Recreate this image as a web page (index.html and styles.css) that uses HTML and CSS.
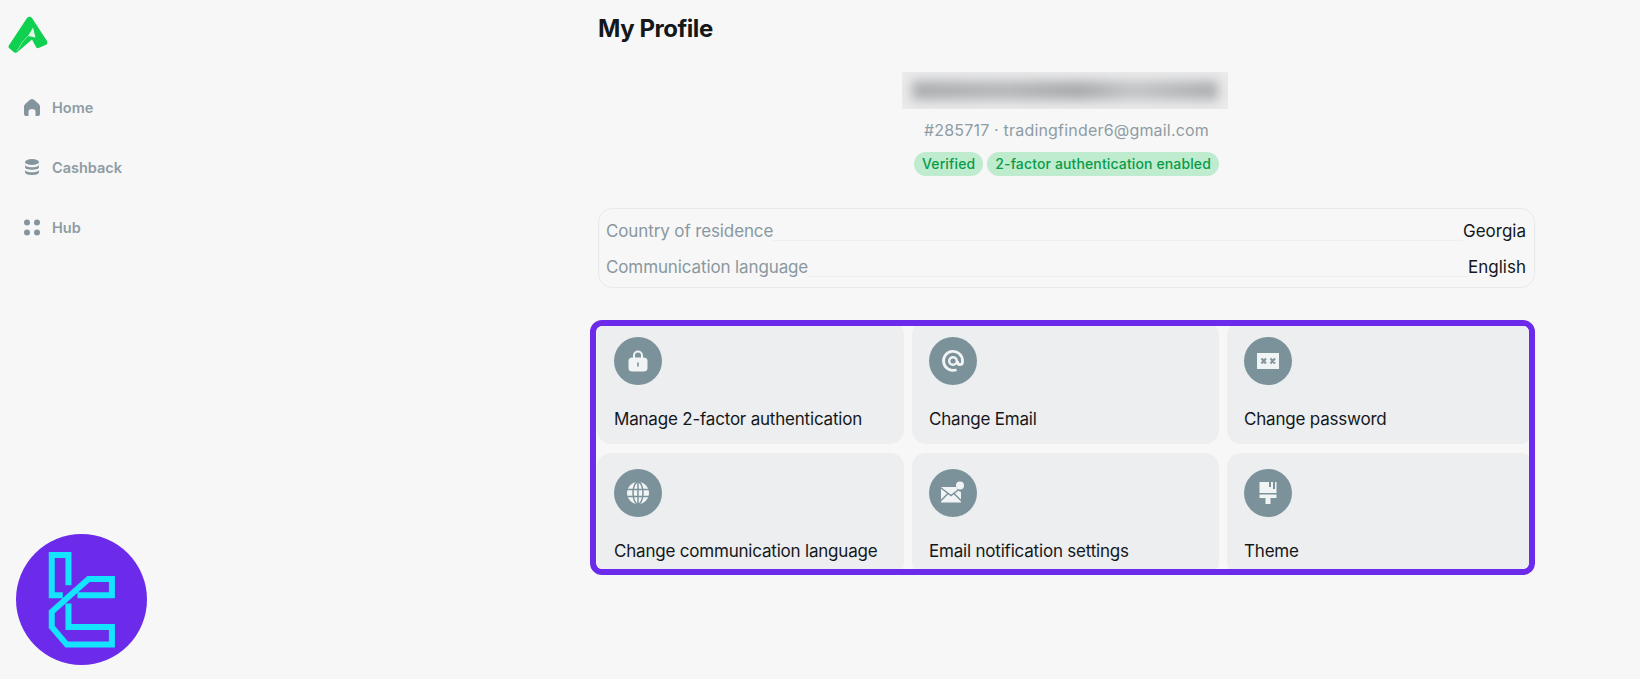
FILE: index.html
```html
<!DOCTYPE html>
<html lang="en">
<head>
<meta charset="utf-8">
<title>My Profile</title>
<link rel="stylesheet" href="styles.css">
</head>
<body>
<div class="page">
  <aside class="sidebar">
    <svg class="logo" viewBox="0 0 48 56" width="48" height="56">
      <path fill="#0fd14f" d="M27 18Q29.500 15.500 32 18L47 41Q48 44 45.500 45L38.500 48Q36.500 48.500 36 47L32 39.500L17.500 52Q15.500 53.500 14 52.300L9 48Q7.800 47 9 45.300Z"/>
      <path fill="#dff7e6" d="M33 27.500L35.500 37.500L28 36Z"/>
      <path fill="none" stroke="#c9f3d6" stroke-width=".6" d="M17 51Q22 41 28 36"/>
    </svg>
    <nav class="nav">
      <a class="nav-item">
        <svg class="nav-icon" viewBox="0 0 16 17"><path fill="#84959e" d="M8 0Q9 0 10 .8L14.800 5Q16 6 16 7.500V15Q16 17 14 17H11.500V12.500Q11.500 10 8 10T4.500 12.500V17H2Q0 17 0 15V7.500Q0 6 1.200 5L6 .8Q7 0 8 0Z"/></svg>
        <span>Home</span>
      </a>
      <a class="nav-item">
        <svg class="nav-icon" viewBox="0 0 16 17"><g fill="#84959e"><ellipse cx="8" cy="3" rx="7" ry="3"/><path d="M1 6.200Q3 8.200 8 8.200T15 6.200V8Q15 10.800 8 10.800T1 8Z"/><path d="M1 11.200Q3 13.200 8 13.200T15 11.200V13Q15 16 8 16T1 13Z"/></g></svg>
        <span>Cashback</span>
      </a>
      <a class="nav-item">
        <svg class="nav-icon" viewBox="0 0 16 17"><g fill="#84959e"><circle cx="3" cy="3.500" r="3"/><circle cx="13" cy="3.500" r="3"/><circle cx="3" cy="13.500" r="3"/><circle cx="13" cy="13.500" r="3"/></g></svg>
        <span>Hub</span>
      </a>
    </nav>
  </aside>

  <main class="content">
    <h1 class="title">My Profile</h1>
    <section class="identity">
      <div class="name-blur"><div class="name-blur-ink"></div></div>
      <p class="account">#285717 · tradingfinder6@gmail.com</p>
      <div class="badges">
        <span class="badge">Verified</span>
        <span class="badge">2-factor authentication enabled</span>
      </div>
    </section>

    <section class="info">
      <div class="info-row"><span class="info-label">Country of residence</span><span class="info-rule"></span><span class="info-value">Georgia</span></div>
      <div class="info-row"><span class="info-label">Communication language</span><span class="info-rule"></span><span class="info-value">English</span></div>
    </section>

    <section class="frame">
      <div class="grid">
        <a class="card">
          <span class="circle"><svg viewBox="0 0 24 24" width="24" height="24"><path fill="none" stroke="#f1f4f5" stroke-width="2" d="M8 9V6.500A4 4 0 0 1 16 6.500V9"/><path fill="#f1f4f5" fill-rule="evenodd" d="M6.500 8.500H17.500Q21.500 8.500 21.500 12V19Q21.500 22.500 17.500 22.500H6.500Q2.500 22.500 2.500 19V12Q2.500 8.500 6.500 8.500ZM11.200 13.500V17.500H12.800V13.500Z"/></svg></span>
          <span class="card-label">Manage 2-factor authentication</span>
        </a>
        <a class="card">
          <span class="circle"><svg viewBox="0 0 24 24" width="24" height="24"><path fill="none" stroke="#f1f4f5" stroke-width="2.800" d="M15.500 20.700A9.500 9.500 0 1 1 21.500 12V13Q21.500 15.500 19 15.500T16.500 13V12"/><circle cx="12" cy="12" r="3.800" fill="none" stroke="#f1f4f5" stroke-width="2.400"/></svg></span>
          <span class="card-label">Change Email</span>
        </a>
        <a class="card">
          <span class="circle"><svg viewBox="0 0 24 24" width="24" height="24"><path fill="#f1f4f5" d="M1 4H23V20H1Z"/><path fill="none" stroke="#84969e" stroke-width="2.200" d="M5.500 9.500L10 14.500M10 9.500L5.500 14.500M14.500 9.500L19 14.500M19 9.500L14.500 14.500"/></svg></span>
          <span class="card-label">Change password</span>
        </a>
        <a class="card">
          <span class="circle"><svg viewBox="0 0 24 24" width="24" height="24"><circle cx="12" cy="12" r="11" fill="#f1f4f5"/><g fill="none" stroke="#7c929b" stroke-width="1.500"><ellipse cx="12" cy="12" rx="5" ry="11"/><path d="M12 1V23M1 8.500H23M1 15.500H23"/></g></svg></span>
          <span class="card-label">Change communication language</span>
        </a>
        <a class="card">
          <span class="circle"><svg viewBox="0 0 26 24" width="26" height="24"><path fill="#f1f4f5" d="M1 6H16.500Q17 10 21 11V21.500H1Z"/><path fill="none" stroke="#7c929b" stroke-width="1.500" d="M.5 6.500L11 14.500L21.500 6.500M.5 20L8 12.500M21.500 20L14 12.500"/><circle cx="20" cy="4.500" r="4" fill="#f1f4f5"/></svg></span>
          <span class="card-label">Email notification settings</span>
        </a>
        <a class="card">
          <span class="circle"><svg viewBox="0 0 24 24" width="24" height="24"><path fill="#f1f4f5" fill-rule="evenodd" d="M3.500 1H20.500V17H14.500V23H9.500V17H3.500ZM3.500 12H20.500V13.500H3.500ZM13 1H15V6H13ZM17 1H19V8H17Z"/></svg></span>
          <span class="card-label">Theme</span>
        </a>
      </div>
    </section>
  </main>

  <svg class="watermark" viewBox="48 42 392 392" width="131" height="131">
    <circle cx="244" cy="238" r="196" fill="#6c2bea"/>
    <g fill="none" stroke="#14e4ff" stroke-width="18">
      <path d="M205 195V105H155V225H188"/>
      <path d="M232 225H335V177H265L155 275V320L200 373H335V320H205V250"/>
    </g>
  </svg>
</div>
</body>
</html>
```
FILE: styles.css
```css
* { box-sizing: border-box; }
html, body { margin: 0; height: 100%; overflow: hidden; }
body {
  background: #f7f7f7;
  color: #15181b;
  font-family: Inter, "Liberation Sans", sans-serif;
}
.page { display: flex; position: relative; height: 679px; }
.sidebar { width: 598px; flex: none; }
.logo { display: block; }
.nav { display: flex; flex-direction: column; gap: 36px; margin: 39px 0 0 24px; }
.nav-item {
  display: flex;
  align-items: center;
  gap: 12px;
  height: 24px;
  font-size: 14.500px;
  font-weight: 600;
  color: #8e9ca4;
}
.nav-icon { width: 16px; height: 17px; flex: none; }
.content { width: 937px; flex: none; }
.title {
  margin: 13px 0 0;
  font-size: 24px;
  line-height: 32px;
  font-weight: 700;
  letter-spacing: -.45px;
  color: #15181b;
}
.identity { display: flex; flex-direction: column; align-items: center; margin-top: 27px; }
.name-blur { width: 326px; height: 37px; margin-right: 4px; background: #ebebec; overflow: hidden; }
.name-blur-ink {
  margin: 9px 10px;
  height: 19px;
  background: linear-gradient(90deg, #a9acae, #b4b6b8 30%, #a6a9ab 55%, #c2c4c5 72%, #a9acae 100%);
  filter: blur(6px);
}
.account { margin: 9px 0 0; font-size: 16px; line-height: 24px; letter-spacing: .19px; color: #8e9ca4; }
.badges { display: flex; gap: 4px; margin-top: 10px; }
.badge {
  height: 24px;
  padding: 0 8px;
  border-radius: 12px;
  background: #bfeccf;
  color: #0a9b48;
  font-size: 14px;
  line-height: 24px;
  font-weight: 500;
  letter-spacing: .13px;
}
.info {
  margin-top: 32px;
  height: 80px;
  padding: 6px 8px 0 7px;
  border: 1px solid #e8e9ea;
  border-radius: 14px;
}
.info-row { display: flex; height: 36px; font-size: 17px; line-height: 32px; }
.info-label { color: #8a989f; letter-spacing: -.12px; }
.info-rule { flex: 1; margin: 0 0 10px; border-bottom: 1px solid #eeeff0; }
.info-value { color: #15181b; }
.frame {
  margin: 32px 0 0 -8px;
  width: 945px;
  height: 255px;
  border: 6px solid #6c2bea;
  border-radius: 12px;
  overflow: hidden;
}
.grid {
  display: grid;
  grid-template-columns: repeat(3, 307px);
  grid-template-rows: repeat(2, 123px);
  gap: 9px 8px;
  margin: -5px 0 0 1px;
}
.card {
  display: flex;
  flex-direction: column;
  align-items: flex-start;
  padding: 16px 17px 0;
  border-radius: 14px;
  background: #eceef0;
}
.circle {
  display: flex;
  align-items: center;
  justify-content: center;
  width: 48px;
  height: 48px;
  border-radius: 50%;
  background: #7c929b;
}
.card-label { margin-top: 22px; font-size: 17px; line-height: 24px; letter-spacing: -.2px; color: #15181b; }
.watermark { position: absolute; left: 16px; top: 534px; }
```
